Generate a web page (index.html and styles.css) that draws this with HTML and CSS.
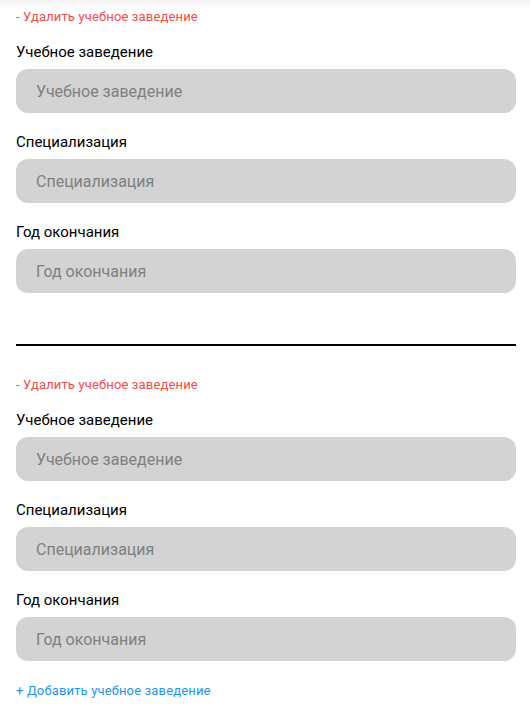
FILE: index.html
```html
<!DOCTYPE html>
<html lang="ru">
<head>
<meta charset="utf-8">
<link rel="stylesheet" href="styles.css">
</head>
<body>
<div class="page">
  <section class="edu">
    <a class="remove">- Удалить учебное заведение</a>
    <div class="field">
      <label class="label">Учебное заведение</label>
      <input class="input" placeholder="Учебное заведение">
    </div>
    <div class="field">
      <label class="label">Специализация</label>
      <input class="input" placeholder="Специализация">
    </div>
    <div class="field">
      <label class="label">Год окончания</label>
      <input class="input" placeholder="Год окончания">
    </div>
  </section>
  <hr class="divider">
  <section class="edu">
    <a class="remove">- Удалить учебное заведение</a>
    <div class="field">
      <label class="label">Учебное заведение</label>
      <input class="input" placeholder="Учебное заведение">
    </div>
    <div class="field">
      <label class="label">Специализация</label>
      <input class="input" placeholder="Специализация">
    </div>
    <div class="field">
      <label class="label">Год окончания</label>
      <input class="input" placeholder="Год окончания">
    </div>
  </section>
  <a class="add">+ Добавить учебное заведение</a>
</div>
</body>
</html>
```
FILE: styles.css
```css
* { box-sizing: border-box; }
html, body { margin: 0; padding: 0; background: #fff; }
body {
  font-family: Roboto, "Liberation Sans", sans-serif;
  color: #000;
  background: linear-gradient(#f3f3f3 0, #fff 10px) no-repeat;
  min-height: 707px;
}
.page {
  padding: 6px 14px 0 16px;
  display: flex;
  flex-direction: column;
}
.edu { display: flex; flex-direction: column; }
.remove {
  font-size: 13px;
  line-height: 22px;
  letter-spacing: 0.15px;
  color: #f44a4a;
}
.field {
  display: flex;
  flex-direction: column;
  gap: 7px;
  margin-top: 14px;
}
.field + .field { margin-top: 19px; }
.label {
  font-size: 15px;
  line-height: 20px;
}
.input {
  height: 44px;
  width: 100%;
  border: none;
  border-radius: 12px;
  background: #d3d3d3;
  padding: 0 20px;
  font-family: Roboto, "Liberation Sans", sans-serif;
  font-size: 16px;
  color: #333;
  outline: none;
}
.input::placeholder { color: #808080; }
.divider {
  margin: 51px 0 28px;
  border: none;
  height: 2px;
  background: #000;
}
.add {
  margin-top: 19px;
  font-size: 13px;
  line-height: 22px;
  letter-spacing: 0.15px;
  color: #2196f3;
}
```
